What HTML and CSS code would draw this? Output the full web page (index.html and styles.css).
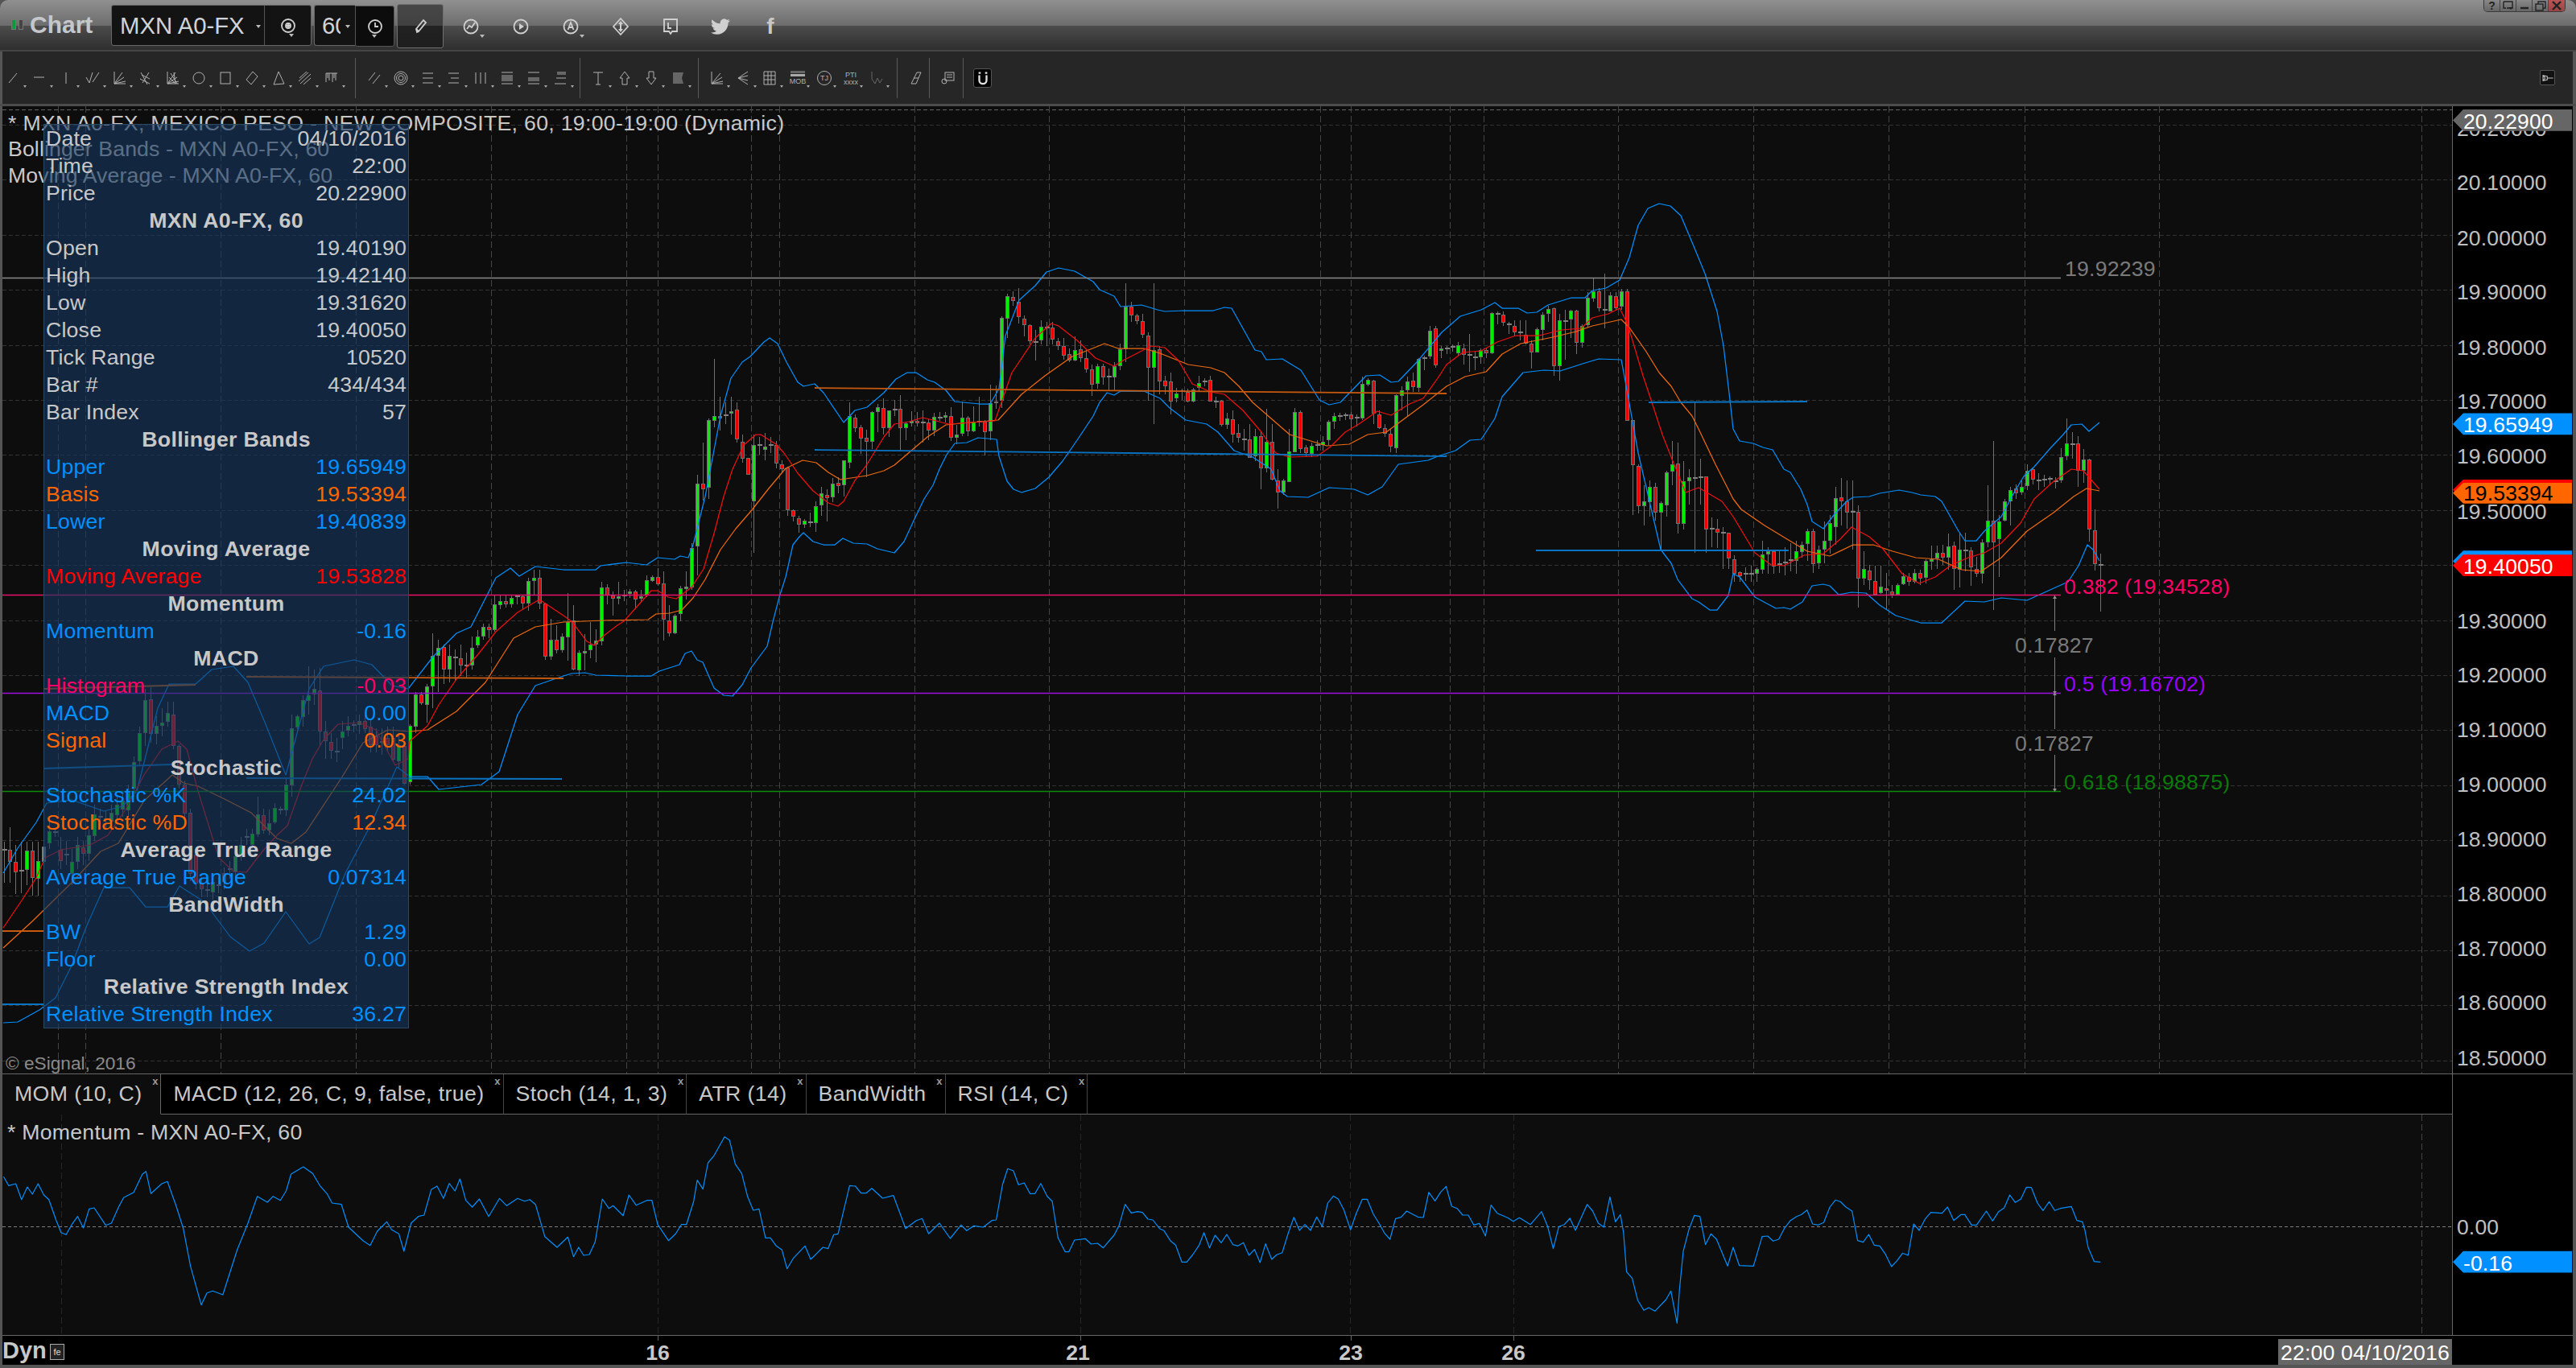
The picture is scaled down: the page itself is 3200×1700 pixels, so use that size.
FILE: index.html
```html
<!DOCTYPE html>
<html lang="en">
<head>
<meta charset="utf-8">
<title>Chart</title>
<link rel="stylesheet" href="styles.css">
</head>
<body>
<div class="window">
  <header class="titlebar">
    <div class="logo"><span class="logo-bar logo-green"></span><span class="logo-bar logo-gray"></span></div>
    <div class="app-name">Chart</div>
    <div class="symbol-box">
      <div class="symbol-text">MXN A0-FX<i class="caret caret-light"></i></div>
      <div class="symbol-link">
        <svg class="ticon" viewBox="0 0 24 24"><circle cx="12" cy="12" r="8"/><circle cx="12" cy="12" r="3"/><path d="M12 9v6M9 12h6"/></svg><i class="caret caret-light"></i>
      </div>
    </div>
    <div class="interval-box"><span class="interval-text">60</span><i class="caret caret-light"></i></div>
    <div class="clock-box"><svg class="ticon" viewBox="0 0 24 24"><circle cx="12" cy="12" r="8"/><path d="M12 7v5h4"/></svg><i class="caret caret-light"></i></div>
    <div class="pencil-box"><svg class="ticon" viewBox="0 0 24 24"><path d="M8 19l-1-4L16 4l3 3L10 18z"/><path d="M7 15l3 3"/></svg></div>
    <div class="title-icons">
      <span class="ti"><svg class="ticon" viewBox="0 0 24 24"><circle cx="12" cy="12" r="8.5"/><path d="M7 15l3-4 3 2 4-6"/></svg><i class="caret caret-light"></i></span>
      <span class="ti"><svg class="ticon" viewBox="0 0 24 24"><circle cx="12" cy="12" r="8.5"/><path class="solid" d="M10 8l6 4-6 4z"/></svg></span>
      <span class="ti"><svg class="ticon" viewBox="0 0 24 24"><circle cx="12" cy="12" r="8.5"/><path d="M8.5 16L12 7l3.5 9M10 13h4"/></svg><i class="caret caret-light"></i></span>
      <span class="ti"><svg class="ticon" viewBox="0 0 24 24"><path d="M12 2l9 10-9 10-9-10z"/><path class="solid" d="M12 5l3 4h-2v3h-2V9H9zM12 19l-3-4h2v-3h2v3h2z"/></svg></span>
      <span class="ti"><svg class="ticon" viewBox="0 0 24 24"><path d="M4 3h16v15h-6l-2 3-2-3H4z"/><path d="M9 7v7h4"/></svg></span>
      <span class="ti"><svg class="ticon" viewBox="0 0 24 24"><path class="solid" d="M23.95 4.57a10 10 0 01-2.83.8 4.96 4.96 0 002.16-2.72c-.95.56-2 .96-3.13 1.2a4.92 4.92 0 00-8.38 4.48A13.98 13.98 0 011.64 3.16a4.9 4.9 0 001.52 6.57 4.9 4.9 0 01-2.23-.62v.06a4.92 4.92 0 003.95 4.83 5 5 0 01-2.21.08 4.94 4.94 0 004.6 3.42A9.87 9.87 0 010 19.54a13.94 13.94 0 007.55 2.21c9.05 0 14-7.5 14-13.98 0-.21 0-.42-.02-.63A9.94 9.94 0 0024 4.59z"/></svg></span>
      <span class="ti ti-f">f</span>
    </div>
    <div class="win-controls">
      <span class="wc">?</span>
      <span class="wc"><svg class="wc-icon" viewBox="0 0 16 14"><path d="M2 2h11v8H6"/><path d="M2 2v8h3"/><path class="solid-dark" d="M8 9h6l-3 3z"/></svg></span>
      <span class="wc"><svg class="wc-icon" viewBox="0 0 16 14"><path d="M3 10h10" class="thick"/></svg></span>
      <span class="wc"><svg class="wc-icon" viewBox="0 0 16 14"><rect x="2" y="5" width="9" height="8"/><path d="M5 5V2h9v8h-3"/></svg></span>
      <span class="wc wc-close"><svg class="wc-icon" viewBox="0 0 16 14"><path class="thick" d="M3 2l10 10M13 2L3 12"/></svg></span>
    </div>
  </header>

  <nav class="toolbar">
    <div class="tb-group tb-g1">
      <span class="tb"><svg viewBox="0 0 20 20"><path d="M5 16L15 4"/></svg></span>
      <span class="tb"><svg viewBox="0 0 20 20"><path d="M3 9h13"/></svg></span>
      <span class="tb"><svg viewBox="0 0 20 20"><path d="M10 3v14"/></svg></span>
      <span class="tb"><svg viewBox="0 0 20 20"><path d="M2 9l4 7 4-13M10 15l4-6 4-6"/></svg></span>
      <span class="tb"><svg viewBox="0 0 20 20"><path d="M4 2v15h14M4 17L14 3M4 17l12-8M4 17l14-3"/></svg></span>
      <span class="tb"><svg viewBox="0 0 20 20"><path d="M6 16L14 3M3 11l12 6M5 6l10 5M4 3l8 15"/></svg></span>
      <span class="tb"><svg viewBox="0 0 20 20"><path d="M4 2v15h14M4 17L14 3M4 17l12-8M4 17l14-3M8 4l8 13M6 9l8 8M12 3l2 14"/></svg></span>
      <span class="tb"><svg viewBox="0 0 20 20"><circle cx="10" cy="10" r="7"/></svg></span>
      <span class="tb"><svg viewBox="0 0 20 20"><rect x="4" y="3" width="12" height="14"/></svg></span>
      <span class="tb"><svg viewBox="0 0 20 20"><path d="M11 2l6 6-8 10-6-6z"/></svg></span>
      <span class="tb"><svg viewBox="0 0 20 20"><path d="M10 2l7 15-13 1z"/></svg></span>
      <span class="tb"><svg viewBox="0 0 20 20"><path d="M2 14L14 3M4 17L17 5M3 10l9-8M8 18l9-8"/></svg></span>
      <span class="tb"><svg viewBox="0 0 20 20"><path d="M3 4h14M3 4v11M7 4v9M11 4v11M15 4v9M5 4v6M13 4v6"/></svg></span>
    </div>
    <div class="tb-group tb-g2">
      <span class="tb"><svg viewBox="0 0 20 20"><path d="M3 13L11 3M8 17l9-11"/></svg></span>
      <span class="tb"><svg viewBox="0 0 20 20"><circle cx="10" cy="10" r="8"/><circle cx="10" cy="10" r="5.5"/><circle cx="10" cy="10" r="3"/></svg></span>
      <span class="tb"><svg viewBox="0 0 20 20"><path d="M4 4h13M4 10h13M4 16h13"/></svg></span>
      <span class="tb"><svg viewBox="0 0 20 20"><path d="M3 4h13M6 10h10M3 16h13"/></svg></span>
      <span class="tb"><svg viewBox="0 0 20 20"><path d="M4 3v14M10 3v14M16 3v14"/></svg></span>
      <span class="tb"><svg viewBox="0 0 20 20"><path d="M3 3h14M3 17h14"/><rect class="fill-gray" x="3" y="6" width="14" height="8"/></svg></span>
      <span class="tb"><svg viewBox="0 0 20 20"><path d="M3 3h14M3 17h14"/><rect class="fill-gray" x="3" y="9" width="14" height="5"/></svg></span>
      <span class="tb"><svg viewBox="0 0 20 20"><path d="M6 3h11M3 17h14M5 10h12"/><rect class="fill-gray" x="6" y="3" width="11" height="3"/></svg></span>
    </div>
    <div class="tb-group tb-g3">
      <span class="tb"><svg viewBox="0 0 20 20"><path d="M4 3h12M10 3v15M7 18h6"/></svg></span>
      <span class="tb"><svg viewBox="0 0 20 20"><path d="M10 2l6 8h-3v8H7v-8H4z"/></svg></span>
      <span class="tb"><svg viewBox="0 0 20 20"><path d="M10 18l6-8h-3V2H7v8H4z"/></svg></span>
      <span class="tb"><svg viewBox="0 0 20 20"><path class="fill-gray" d="M4 3h13l-2 7 2 7H4z"/></svg></span>
    </div>
    <div class="tb-group tb-g4">
      <span class="tb"><svg viewBox="0 0 20 20"><path d="M4 2v15h14M4 17L15 4M4 17l13-8M4 17l14-3"/></svg></span>
      <span class="tb"><svg viewBox="0 0 20 20"><path d="M16 2L4 10l12 8M16 7l-12 3 12 3"/></svg></span>
      <span class="tb"><svg viewBox="0 0 20 20"><path d="M3 2h14v16H3zM3 7h14M3 12h14M8 2v16M12 2v16"/></svg></span>
      <span class="tb tb-text"><svg viewBox="0 0 24 20"><rect class="fill-gray" x="3" y="1" width="18" height="3"/><rect class="fill-lite" x="3" y="5" width="18" height="3"/><text class="mini" x="12" y="17">MOB</text></svg></span>
      <span class="tb tb-text"><svg viewBox="0 0 24 20"><circle cx="12" cy="10" r="8.5"/><text class="mini" x="12" y="13">TJ</text></svg></span>
      <span class="tb tb-text"><svg viewBox="0 0 24 20"><text class="mini" x="12" y="9">PTI</text><text class="mini" x="12" y="18">xxxx</text></svg></span>
      <span class="tb"><svg viewBox="0 0 20 20"><path class="dim" d="M5 2v9l4 6 3-7 3 6 3-5"/></svg></span>
    </div>
    <div class="tb-group tb-g5">
      <span class="tb tb-plain"><svg viewBox="0 0 20 20"><path d="M12 3h5l-6 14H5z"/><path d="M8 10h6"/></svg></span>
    </div>
    <div class="tb-group tb-g6">
      <span class="tb tb-plain"><svg viewBox="0 0 20 20"><rect x="6" y="3" width="11" height="10"/><path d="M8 6h7M8 9h7"/><circle cx="5" cy="14" r="3"/></svg></span>
    </div>
    <div class="magnet-box">
      <svg viewBox="0 0 20 20"><path d="M5 6v7a5 5 0 0010 0V6" class="thick"/><path d="M4 3h3M13 3h3" class="thick"/></svg>
    </div>
    <div class="pin-box">
      <svg viewBox="0 0 24 20"><path d="M3 5l8 2v6l-8 2zM3 5l4 5-4 5M11 10h11"/></svg>
    </div>
  </nav>
  <div class="toolbar-strip"></div>

  <main class="chart">
    <section class="row row-main">
      <div class="plot plot-main">
        <svg id="priceCanvas" class="canvas" viewBox="3 132 3043 1202">
          <g id="priceGrid"></g>
          <g id="candles"></g>
          <g id="bands"></g>
          <g class="drawn">
            <line class="obj-gray" x1="3" y1="345.5" x2="2560" y2="345.5"/>
            <line class="obj-pink" x1="3" y1="739.5" x2="2560" y2="739.5"/>
            <line class="obj-purple" x1="3" y1="861.5" x2="2560" y2="861.5"/>
            <line class="obj-green" x1="3" y1="983.5" x2="2560" y2="983.5"/>
            <line class="obj-orange" x1="3" y1="1157" x2="54" y2="1157"/>
            <line class="obj-orange" x1="54" y1="856" x2="243" y2="851"/>
            <line class="obj-orange" x1="306" y1="841" x2="700" y2="843"/>
            <line class="obj-orange" x1="1012" y1="482" x2="1797" y2="489"/>
            <line class="obj-blue" x1="3" y1="1248" x2="54" y2="1248"/>
            <line class="obj-blue" x1="54" y1="955" x2="214" y2="950"/>
            <line class="obj-blue" x1="306" y1="967" x2="698" y2="968"/>
            <line class="obj-blue" x1="1012" y1="559" x2="1797" y2="567"/>
            <line class="obj-blue" x1="2048" y1="500" x2="2245" y2="499"/>
            <line class="obj-blue" x1="1908" y1="684" x2="2222" y2="684"/>
            <path class="obj-arrow" d="M2552.5 740v44M2552.5 817v89M2552.5 938v45"/>
            <path class="obj-head" d="M2550 744l2.5-4 2.5 4zM2550 980l2.5 4 2.5-4zM2550 859l2.5 3 2.5-3zM2550 864l2.5-3 2.5 3z"/>
          </g>
          <g class="chart-labels">
            <text class="lbl lbl-gray" x="2565" y="343">19.92239</text>
            <text class="lbl lbl-pink" x="2564" y="738">0.382 (19.34528)</text>
            <text class="lbl lbl-gray lbl-mid" x="2552" y="811">0.17827</text>
            <text class="lbl lbl-purple" x="2564" y="859">0.5 (19.16702)</text>
            <text class="lbl lbl-gray lbl-mid" x="2552" y="933">0.17827</text>
            <text class="lbl lbl-green" x="2564" y="981">0.618 (18.98875)</text>
          </g>
        </svg>
        <div class="legend">
          <div class="legend-main">* MXN A0-FX, MEXICO PESO - NEW COMPOSITE, 60, 19:00-19:00 (Dynamic)</div>
          <div>Bollinger Bands - MXN A0-FX, 60</div>
          <div>Moving Average - MXN A0-FX, 60</div>
        </div>
        <div class="copyright">© eSignal, 2016</div>
        <div class="info">
          <div class="irow"><span>Date</span><span>04/10/2016</span></div>
          <div class="irow"><span>Time</span><span>22:00</span></div>
          <div class="irow"><span>Price</span><span>20.22900</span></div>
          <div class="ihead">MXN A0-FX, 60</div>
          <div class="irow"><span>Open</span><span>19.40190</span></div>
          <div class="irow"><span>High</span><span>19.42140</span></div>
          <div class="irow"><span>Low</span><span>19.31620</span></div>
          <div class="irow"><span>Close</span><span>19.40050</span></div>
          <div class="irow"><span>Tick Range</span><span>10520</span></div>
          <div class="irow"><span>Bar #</span><span>434/434</span></div>
          <div class="irow"><span>Bar Index</span><span>57</span></div>
          <div class="ihead">Bollinger Bands</div>
          <div class="irow c-blue"><span>Upper</span><span>19.65949</span></div>
          <div class="irow c-orange"><span>Basis</span><span>19.53394</span></div>
          <div class="irow c-blue"><span>Lower</span><span>19.40839</span></div>
          <div class="ihead">Moving Average</div>
          <div class="irow c-red"><span>Moving Average</span><span>19.53828</span></div>
          <div class="ihead">Momentum</div>
          <div class="irow c-blue"><span>Momentum</span><span>-0.16</span></div>
          <div class="ihead">MACD</div>
          <div class="irow c-pink"><span>Histogram</span><span>-0.03</span></div>
          <div class="irow c-blue"><span>MACD</span><span>0.00</span></div>
          <div class="irow c-orange"><span>Signal</span><span>0.03</span></div>
          <div class="ihead">Stochastic</div>
          <div class="irow c-blue"><span>Stochastic %K</span><span>24.02</span></div>
          <div class="irow c-orange"><span>Stochastic %D</span><span>12.34</span></div>
          <div class="ihead">Average True Range</div>
          <div class="irow c-blue"><span>Average True Range</span><span>0.07314</span></div>
          <div class="ihead">BandWidth</div>
          <div class="irow c-blue"><span>BW</span><span>1.29</span></div>
          <div class="irow c-blue"><span>Floor</span><span>0.00</span></div>
          <div class="ihead">Relative Strength Index</div>
          <div class="irow c-blue"><span>Relative Strength Index</span><span>36.27</span></div>
        </div>
      </div>
      <div class="axis">
        <svg class="canvas" viewBox="3047 132 150 1202">
          <g class="axis-labels">
            <text x="3052" y="165">20.20000</text>
            <text x="3052" y="233">20.10000</text>
            <text x="3052" y="302">20.00000</text>
            <text x="3052" y="370">19.90000</text>
            <text x="3052" y="439">19.80000</text>
            <text x="3052" y="507">19.70000</text>
            <text x="3052" y="575">19.60000</text>
            <text x="3052" y="644">19.50000</text>
            <text x="3052" y="781">19.30000</text>
            <text x="3052" y="849">19.20000</text>
            <text x="3052" y="917">19.10000</text>
            <text x="3052" y="986">19.00000</text>
            <text x="3052" y="1054">18.90000</text>
            <text x="3052" y="1123">18.80000</text>
            <text x="3052" y="1191">18.70000</text>
            <text x="3052" y="1259">18.60000</text>
            <text x="3052" y="1328">18.50000</text>
          </g>
          <polygon class="tag-gray" points="3047,145.5 3060,132 3196,132 3196,159 3060,159"/>
          <text class="tag-text" x="3060" y="156">20.22900</text>
          <polygon class="tag-blue" points="3047,525.5 3060,512 3196,512 3196,539 3060,539"/>
          <text class="tag-text" x="3060" y="536">19.65949</text>
          <polygon class="tag-red" points="3047,608 3060,595 3196,595 3196,621 3060,621"/>
          <polygon class="tag-orange" points="3047,612 3060,599 3196,599 3196,625 3060,625"/>
          <text class="tag-text tag-dark" x="3060" y="621">19.53394</text>
          <polygon class="tag-blue" points="3047,697 3060,684 3196,684 3196,711 3060,711"/>
          <polygon class="tag-red" points="3047,702.5 3060,689 3196,689 3196,716 3060,716"/>
          <text class="tag-text" x="3060" y="713">19.40050</text>
        </svg>
      </div>
    </section>

    <section class="row row-tabs">
      <div class="tabs">
        <div class="tab tab-active">MOM (10, C)<i class="tab-x">x</i></div>
        <div class="tab">MACD (12, 26, C, 9, false, true)<i class="tab-x">x</i></div>
        <div class="tab">Stoch (14, 1, 3)<i class="tab-x">x</i></div>
        <div class="tab">ATR (14)<i class="tab-x">x</i></div>
        <div class="tab">BandWidth<i class="tab-x">x</i></div>
        <div class="tab">RSI (14, C)<i class="tab-x">x</i></div>
        <div class="tab-rest"></div>
      </div>
      <div class="axis"></div>
    </section>

    <section class="row row-sub">
      <div class="plot plot-sub">
        <svg id="momentumCanvas" class="canvas" viewBox="3 1385 3043 274"></svg>
        <div class="sub-legend">* Momentum - MXN A0-FX, 60</div>
      </div>
      <div class="axis">
        <svg class="canvas" viewBox="3047 1385 150 274">
          <g class="axis-labels"><text x="3052" y="1534">0.00</text></g>
          <polygon class="tag-blue" points="3047,1568.5 3060,1555 3196,1555 3196,1582 3060,1582"/>
          <text class="tag-text" x="3060" y="1579">-0.16</text>
        </svg>
      </div>
    </section>

    <footer class="timebar">
      <svg class="canvas" viewBox="3 1660 3193 36">
        <text class="time-dyn" x="3" y="1688">Dyn</text>
        <rect class="time-box" x="62.5" y="1670.5" width="17" height="19"/>
        <text class="time-fe" x="71" y="1684">fe</text>
        <path class="time-tick" d="M817.5 1660v6M1342.5 1660v6M1678.5 1660v6M1880.5 1660v6"/>
        <text class="time-date" x="817" y="1690">16</text>
        <text class="time-date" x="1339" y="1690">21</text>
        <text class="time-date" x="1678" y="1690">23</text>
        <text class="time-date" x="1880" y="1690">26</text>
        <rect class="time-cursor" x="2830" y="1664" width="216" height="32"/>
        <text class="time-cursor-text" x="2938" y="1690">22:00 04/10/2016</text>
      </svg>
    </footer>
  </main>
</div>
<script src="chart.js"></script>
</body>
</html>
```
FILE: styles.css
```css
* { box-sizing: border-box; }
html, body { margin: 0; padding: 0; background: #000; }
body { font-family: "Liberation Sans", Arial, sans-serif; color: #c8c8c8; }

.window {
  width: 3200px; height: 1700px; overflow: hidden;
  display: flex; flex-direction: column;
  background: #555;
  padding-bottom: 4px;
}

/* title bar */
.titlebar {
  height: 64px; flex: none; display: flex; align-items: flex-start;
  background: linear-gradient(#909090 0, #6c6c6c 32px, #4c4c4c 32px, #2e2e2e 62px, #454545 62px, #454545 64px);
  border-radius: 10px 10px 0 0;
}
.logo { display: flex; gap: 3px; margin: 24px 0 0 14px; }
.logo-bar { width: 6px; height: 13px; border: 1px solid #777; }
.logo-green { background: #0c9a3c; }
.logo-gray { background: #444; }
.app-name { font-size: 30px; font-weight: bold; color: #c4c8cc; margin: 14px 0 0 8px; width: 101px; }
.symbol-box {
  width: 249px; height: 51px; margin-top: 6px; display: flex;
  background: #131313; border: 1px solid #666; border-radius: 3px;
}
.symbol-text { width: 190px; height: 100%; padding-left: 10px; font-size: 29.3px; line-height: 49px; color: #d0d4d8; border-right: 1px solid #555; position: relative; }
.symbol-link { flex: 1; display: flex; align-items: center; justify-content: center; position: relative; }
.interval-box {
  width: 51px; height: 51px; margin: 6px 0 0 3px; background: #131313; border: 1px solid #666; border-right: 0;
  position: relative; overflow: hidden; border-radius: 3px 0 0 3px;
}
.interval-text { display: block; width: 23px; overflow: hidden; margin-left: 9px; font-size: 29.3px; line-height: 49px; color: #d0d4d8; }
.clock-box {
  width: 49px; height: 51px; margin-top: 7px; background: #0c0c0c; border: 1px solid #555; border-radius: 0 3px 3px 3px;
  display: flex; align-items: center; justify-content: center; position: relative;
}
.pencil-box {
  width: 58px; height: 55px; margin: 5px 0 0 3px; border: 1px solid #707070; border-radius: 3px;
  background: linear-gradient(#484848 0, #404040 50%, #222 50%, #1e1e1e 100%);
  display: flex; align-items: center; justify-content: center;
}
.ticon { width: 24px; height: 24px; fill: none; stroke: #d0d0d0; stroke-width: 1.8; }
.ticon .solid { fill: #d0d0d0; stroke: none; }
.title-icons { display: flex; margin: 20px 0 0 3px; }
.ti { width: 62px; height: 26px; display: flex; align-items: center; justify-content: center; position: relative; }
.ti-f { font-size: 28px; font-weight: bold; color: #c8c8c8; }
.caret { position: absolute; width: 0; height: 0; border-left: 3px solid transparent; border-right: 3px solid transparent; border-top: 4px solid #bbb; }
.caret-light { right: 10px; bottom: 14px; }
.ti .caret { right: 14px; bottom: -1px; }
.symbol-link .caret, .clock-box .caret { right: 21px; bottom: 10px; }
.interval-box .caret { right: 6px; bottom: 21px; }
.symbol-text .caret { right: 4px; bottom: 21px; }

.win-controls { margin-left: auto; margin-right: 13px; display: flex; height: 15px; border: 1px solid #3a3a3a; border-top: 0; border-radius: 0 0 5px 5px; overflow: hidden; }
.wc {
  width: 20px; height: 100%; display: flex; align-items: center; justify-content: center;
  font-size: 14px; font-weight: bold; color: #222; border-right: 1px solid #444;
  background: linear-gradient(#888, #666);
}
.wc:last-child { border-right: 0; }
.wc-close { background: linear-gradient(#b55, #944); }
.wc-icon { width: 16px; height: 14px; fill: none; stroke: #222; stroke-width: 1.4; }
.wc-icon .thick { stroke-width: 2.4; }
.wc-icon .solid-dark { fill: #222; stroke: none; }

/* drawing toolbar */
.toolbar {
  height: 65px; flex: none; display: flex; align-items: center; position: relative;
  margin: 0 4px 0 3px; background: #262626;
}
.tb-group { height: 50px; display: flex; align-items: center; border-right: 1px solid #5a5a5a; flex: none; }
.tb-g1 { width: 439px; padding-left: 3px; }
.tb-g2 { width: 279px; padding-left: 13px; }
.tb-g3 { width: 147px; padding-left: 12px; }
.tb-g4 { width: 247px; padding-left: 12px; }
.tb-g5 { width: 40px; padding-left: 12px; }
.tb-g6 { width: 42px; padding-left: 13px; }
.tb { width: 33px; height: 30px; flex: none; display: flex; align-items: center; position: relative; }
.tb::after {
  content: ""; position: absolute; right: 6px; bottom: 3px;
  border-left: 2.5px solid transparent; border-right: 2.5px solid transparent; border-top: 3px solid #aaa;
}
.tb-plain { width: 22px; }
.tb-plain::after { display: none; }
.tb svg { width: 20px; height: 20px; fill: none; stroke: #b0b0b0; stroke-width: 1; }
.tb-text svg { width: 24px; }
.tb .fill-gray { fill: #666; stroke: none; }
.tb .fill-lite { fill: #aaa; stroke: none; }
.tb .dim { stroke: #666; }
.tb .mini { font-size: 9px; fill: #b0b0b0; stroke: none; text-anchor: middle; }
.magnet-box {
  width: 23px; height: 24px; margin-left: 12px; background: #000; border: 1px solid #555; border-radius: 3px;
  display: flex; align-items: center; justify-content: center;
}
.magnet-box svg { width: 18px; height: 18px; fill: none; stroke: #e0e0e0; }
.magnet-box .thick { stroke-width: 2.6; }
.pin-box {
  width: 19px; height: 19px; margin-left: auto; margin-right: 22px; background: #111; border: 1px solid #555; border-radius: 2px;
  display: flex; align-items: center; justify-content: center;
}
.pin-box svg { width: 16px; height: 14px; fill: none; stroke: #c0c0c0; stroke-width: 1.6; }
.toolbar-strip { height: 3px; flex: none; background: #4c4c4c; }

/* chart */
.chart { flex: 1; margin: 0 4px 0 3px; background: #000; display: flex; flex-direction: column; min-height: 0; }
.row { display: flex; flex: none; }
.row-main { height: 1202px; }
.row-tabs { height: 51px; border-top: 1px solid #666; }
.row-sub { height: 274px; }
.plot { width: 3043px; flex: none; position: relative; background: #0d0d0d; overflow: hidden; }
.axis { flex: 1; border-left: 1px solid #666; background: #000; }
.canvas { display: block; width: 100%; height: 100%; overflow: hidden; }

.legend { position: absolute; left: 7px; top: 5px; font-size: 26.67px; line-height: 32.4px; letter-spacing: .12px; color: #c8c8c8; }
.legend-main { letter-spacing: .31px; }
.copyright { position: absolute; left: 4px; bottom: 0; font-size: 22.67px; line-height: 26px; color: #8a8a8a; }

.info {
  position: absolute; left: 51px; top: 22px; width: 454px;
  background: rgba(21, 55, 94, .615); border: 1px solid #2a4a63;
  font-size: 26.67px; line-height: 34px; letter-spacing: .2px; color: #c8c8c8;
}
.irow { display: flex; justify-content: space-between; height: 34px; padding: 0 2px 0 2px; white-space: nowrap; }
.ihead { height: 34px; text-align: center; font-weight: bold; letter-spacing: .35px; }
.c-blue { color: #0090ff; }
.c-orange { color: #ff6600; }
.c-red { color: #ff0000; }
.c-pink { color: #ff0066; }

/* svg chart parts */
.grid-h { stroke: #333; stroke-width: 1; stroke-dasharray: 5 3; }
.grid-v { stroke: #444; stroke-width: 1; stroke-dasharray: 8 4; }
.grid-top { stroke: #666; stroke-width: 1; stroke-dasharray: 5 3; }
.grid-faint { stroke: #262626; stroke-width: 1; stroke-dasharray: 8 4; }
.zero { stroke: #808080; stroke-width: 1; stroke-dasharray: 4 3; }
.wicks { stroke: #707070; stroke-width: 1; fill: none; shape-rendering: crispEdges; }
.body-g { fill: #00f000; stroke: #707070; stroke-width: 1; shape-rendering: crispEdges; }
.body-r { fill: #f00000; stroke: #707070; stroke-width: 1; shape-rendering: crispEdges; }
.doji { stroke: #808080; stroke-width: 2; shape-rendering: crispEdges; }
.band { fill: none; stroke-width: 1.25; stroke-linejoin: round; }
.band-blue { stroke: #0090ff; }
.band-red { stroke: #f01010; }
.band-orange { stroke: #f06a10; }
.momentum { fill: none; stroke: #0090ff; stroke-width: 1.2; stroke-linejoin: round; }
.drawn line { stroke-width: 1.3; }
.obj-gray { stroke: #8a8a8a; }
.obj-pink { stroke: #e8106a; }
.obj-purple { stroke: #a010e0; }
.obj-green { stroke: #0c8a0c; }
.drawn .obj-orange { stroke: #c85a10; stroke-width: 1.8; }
.drawn .obj-blue { stroke: #0a74c4; stroke-width: 1.8; }
.obj-arrow { stroke: #808080; stroke-width: 1; fill: none; }
.obj-head { fill: #909090; }
.lbl { font-size: 26.67px; letter-spacing: .2px; }
.lbl-gray { fill: #7a7a7a; }
.lbl-pink { fill: #ff0066; }
.lbl-purple { fill: #9900ff; }
.lbl-green { fill: #0a7a0a; }
.lbl-mid { text-anchor: middle; }
.axis-labels text { font-size: 26.67px; letter-spacing: .17px; fill: #c0c0c0; }
.tag-gray { fill: #666; }
.tag-blue { fill: #0090ff; }
.tag-red { fill: #ff0000; }
.tag-orange { fill: #ff6600; }
.tag-text { font-size: 26.67px; letter-spacing: .17px; fill: #fff; }
.tag-dark { fill: #000; }

/* tabs */
.tabs { width: 3043px; flex: none; display: flex; background: #000; }
.tab {
  height: 100%; position: relative; display: flex; align-items: center; white-space: nowrap;
  padding: 0 23px 0 15px; font-size: 26.67px; letter-spacing: .4px; color: #c8c8c8;
  border-right: 1px solid #444; border-bottom: 1px solid #666;
}
.tab-active { background: #0d0d0d; border-bottom-color: #0d0d0d; border-right-color: #666; }
.tab-x { position: absolute; right: 3px; top: 2px; font-size: 13px; font-style: normal; font-weight: bold; color: #999; line-height: 14px; letter-spacing: 0; }
.tab-rest { flex: 1; border-bottom: 1px solid #666; }
.sub-legend { position: absolute; left: 6px; top: 6px; font-size: 26.67px; line-height: 32px; letter-spacing: .25px; color: #c8c8c8; }

/* time bar */
.timebar { flex: 1; border-top: 1px solid #666; background: #000; min-height: 0; }
.time-dyn, .time-date { font-weight: bold; fill: #c8c8c8; }
.time-dyn { font-size: 29px; }
.time-date { font-size: 26.67px; text-anchor: middle; }
.time-box { fill: #222; stroke: #aaa; stroke-width: 1; }
.time-fe { font-size: 11px; fill: #ddd; text-anchor: middle; }
.time-tick { stroke: #666; stroke-width: 1; }
.time-cursor { fill: #666; }
.time-cursor-text { font-size: 26.67px; letter-spacing: .15px; fill: #fff; text-anchor: middle; }
```
FILE: chart.js
```js
// Chart data in pixel space of the window: [bodyTop, bodyBottom, wickTop, wickBottom, colour]
// colour: 1 up (green), 0 down (red)
var SVG_NS = "http://www.w3.org/2000/svg";
function el(parent, name, attrs) {
  var n = document.createElementNS(SVG_NS, name);
  for (var k in attrs) n.setAttribute(k, attrs[k]);
  parent.appendChild(n);
  return n;
}

var A = [
[1056,1056,1046,1097,1],[1056,1070,1028,1097,0],[1071,1083,1050,1111,0],[1082,1082,1046,1110,1],[1057,1080,1046,1100,1],[1057,1090,1046,1113,0],
[1070,1091,1046,1113,1],[1052,1070,1030,1080,1],[1033,1047,1020,1055,1],[1034,1034,1030,1040,1],[1056,1069,1040,1080,0],[1062,1062,1045,1075,1],
[1071,1085,1055,1100,1],[1050,1070,1040,1080,1],[1053,1060,1045,1075,0],[1038,1060,1030,1070,1],[1012,1038,1000,1045,1],[1015,1015,1005,1030,1],
[1018,1018,1008,1030,1],[1010,1020,1000,1030,1],[1000,1012,990,1020,1],[995,1005,985,1015,1],[985,1006,975,1015,1],[947,979,940,990,1],
[911,945,903,952,1],[870,910,856,927,1],[869,911,854,923,0],[902,911,890,925,1],[898,901,880,915,1],[886,896,872,903,1],
[888,926,872,931,0],[927,974,925,980,0],[975,1010,970,1020,0],[1010,1085,1005,1095,0],[1062,1097,1055,1105,0],[1097,1104,1090,1115,0],
[1106,1106,1095,1115,0],[1096,1108,1088,1118,1],[1100,1100,1090,1110,1],[1085,1095,1078,1105,0],[1080,1080,1070,1092,1],[1064,1083,1055,1090,1],
[1050,1062,1040,1070,1],[1040,1040,1030,1050,1],[1036,1049,1030,1055,1],[1012,1036,990,1040,1],[1013,1031,1005,1036,0],[1023,1031,1006,1038,1],
[1004,1021,998,1024,1],[1006,1006,1002,1012,1],[975,1006,967,1014,1],[905,975,888,990,1],[890,903,888,911,1],[870,890,864,903,1],
[864,870,828,888,1],[856,862,832,876,1],[858,908,830,927,0],[909,920,896,943,0],[922,932,911,943,0],[934,934,917,947,1],
[909,916,896,931,1],[902,907,890,915,1],[901,901,895,910,1],[896,900,888,912,1],[896,905,888,911,0],[903,925,895,935,0],
[915,925,905,935,0],[922,922,905,938,1],[917,925,903,935,0],[917,943,903,947,0],[926,945,911,955,1],[927,973,923,975,0]];

var B = [
[902,971,900,975,1],[863,902,860,911,1],[863,873,860,876,0],[853,875,850,898,1],[815,852,787,880,1],[805,814,795,860,1],[804,831,801,850,0],
[815,831,801,848,1],[817,817,807,846,1],[818,826,801,840,0],[827,827,811,843,1],[805,826,791,832,1],[791,801,783,805,1],[779,790,775,795,1],
[779,782,775,793,0],[751,782,739,785,1],[747,751,739,757,1],[747,750,739,755,0],[743,750,739,755,1],[741,741,739,751,1],[741,749,739,757,0],
[722,749,718,759,1],[718,721,708,739,1],[718,749,708,757,0],[750,815,749,820,0],[795,815,769,820,1],[795,807,777,812,0],[791,807,787,811,1]];

var C = [
[773,791,737,821,1],[771,831,752,833,0],[811,832,808,840,1],[809,811,788,833,1],[801,807,773,818,1],[796,800,782,823,1],[730,796,723,802,1],
[730,739,726,751,0],[740,743,735,765,0],[741,743,723,751,1],[740,740,733,747,1],[735,737,732,743,1],[735,744,733,757,0],[741,743,733,747,1],
[721,739,715,742,1],[717,721,715,723,1],[717,725,706,728,0],[725,769,710,796,0],[771,786,752,791,0],[765,786,763,788,1],[731,762,728,772,1],
[729,731,710,745,1],[681,729,675,733,1],[601,678,590,715,1],[601,607,550,622,0],[522,605,520,620,1],[517,522,446,531,1],[517,519,493,535,0],
[516,516,500,527,1],[511,513,493,540,1],[509,545,500,550,0],[549,569,540,575,0],[569,589,569,590,0],[553,622,540,687,1],[553,553,543,565,1],
[555,558,538,572,1],[553,553,543,563,1],[553,575,548,582,0],[577,582,572,587,0],[581,633,580,641,0],[634,641,633,648,0],[644,651,641,662,0],
[647,651,645,656,1],[649,649,637,655,1],[629,649,623,661,1],[613,627,605,641,1],[615,618,608,648,0],[601,617,594,624,1],[600,603,593,613,0],
[572,602,572,617,1],[517,574,500,582,1],[519,531,515,537,0],[531,544,528,564,0],[544,548,534,593,0],[512,548,511,558,1],[506,511,502,537,1],
[507,531,495,540,0],[510,531,510,543,1],[509,509,497,517,1],[508,531,491,560,0],[526,531,525,547,1],[523,525,511,530,1],[523,525,512,530,0],
[525,525,510,550,1],[525,534,521,547,0],[518,534,513,542,1],[519,519,512,523,1],[516,518,512,525,1],[517,543,506,548,0],[540,543,528,552,1],
[519,538,499,542,1],[519,535,517,542,0],[524,535,505,537,1],[524,524,493,530,1],[524,536,522,566,0],[501,535,478,547,1],[499,500,479,508,1]];

var D = [
[395,497,393,507,1],[368,395,365,420,1],[369,373,362,380,0],[375,393,358,402,0],[396,403,392,418,0],[404,423,403,428,0],[425,425,410,448,1],
[406,422,398,428,1],[407,407,400,430,1],[407,421,400,428,0],[424,429,420,435,0],[430,441,420,447,0],[440,447,433,450,0],[435,447,418,449,1],
[434,444,423,450,0],[445,458,435,463,0],[459,477,453,492,0],[455,476,452,483,1],[455,468,452,478,0],[468,468,458,485,0],[455,468,450,485,1],
[434,454,427,460,1],[381,433,352,450,1],[381,391,375,400,0],[392,398,390,403,0],[399,415,390,420,0],[417,456,413,498,0],[435,456,352,527,1],
[434,473,430,490,0],[473,479,467,490,0],[474,498,463,515,0],[489,494,482,500,1],[486,486,483,497,1],[487,498,483,500,0],[484,498,482,500,1],
[476,481,467,487,1],[474,474,470,480,1],[472,498,467,498,0],[499,499,493,507,1],[498,527,497,530,0],[520,527,513,533,1],[521,539,510,550,0],
[538,543,527,550,0],[546,546,533,560,1],[546,568,527,569,0],[542,566,533,573,1],[542,581,537,608,0],[549,581,508,587,1],[549,595,527,597,0],
[597,611,583,632,0],[597,611,595,615,1],[561,598,533,598,1],[512,561,507,562,1],[512,557,510,563,0],[556,562,553,568,0],[554,563,550,568,1],
[553,553,547,560,1],[549,552,542,560,1],[524,546,522,553,1],[517,523,513,533,1],[517,517,513,523,1],[516,516,513,522,1],[515,520,512,535,0],
[519,519,515,530,1],[477,519,468,522,1],[472,477,470,480,1],[473,513,472,527,0],[515,531,510,533,0],[532,538,527,543,0],[539,554,533,562,0],
[491,556,490,563,1],[485,491,480,510,1],[474,484,468,518,1],[473,480,463,487,0],[446,481,445,487,1],[445,445,442,460,1],[411,442,405,446,1],
[408,453,405,457,0],[433,435,430,445,1],[433,433,430,440,1],[431,431,428,437,1],[429,438,425,442,1],[433,440,427,453,0],[441,441,415,462,1],
[444,444,437,460,1],[435,443,433,452,1],[435,438,433,445,0],[389,438,388,440,1],[390,390,387,403,1],[391,400,387,405,0],[403,403,400,415,1],
[405,412,398,418,0],[413,413,398,423,1],[416,426,398,428,0],[427,437,423,458,0],[409,437,407,438,1],[391,409,388,423,1],[384,389,380,400,1],
[383,454,382,467,0],[398,454,390,473,1],[399,399,385,447,1],[386,396,385,420,1],[386,425,385,440,0],[405,425,403,432,1],[370,403,363,407,1],
[362,370,345,375,1],[362,382,358,387,0],[385,385,340,408,1],[367,386,363,387,1],[368,382,363,385,0],[362,380,359,385,1],[362,522,359,523,0]];

var E = [
[522,577,522,640,0],[579,628,577,638,0],[623,628,603,653,1],[605,623,597,642,1],[605,636,600,647,0],[625,636,623,685,1],[587,627,585,642,1],
[577,585,548,603,1],[576,650,550,663,0],[598,650,573,658,1],[593,597,583,627,1],[594,594,499,687,1],[593,593,570,627,1],[592,657,592,687,0],
[657,657,643,680,1],[657,661,645,681,0],[662,662,655,707,1],[662,693,662,707,0],[695,712,690,723,0],[711,715,710,723,0],[713,713,705,722,1],
[713,713,703,723,1],[707,712,705,723,1],[689,707,672,713,1],[685,688,680,713,1],[685,703,683,713,0],[701,701,683,712,1],[699,699,680,715,1],
[696,696,675,710,1],[685,696,672,713,1],[677,685,673,693,1],[660,675,657,697,1],[660,700,657,712,0],[683,699,678,707,1],[672,682,648,700,1],
[650,671,640,688,1],[619,654,605,677,1],[618,622,594,653,0],[623,636,597,657,0],[636,636,597,683,1],[636,718,628,755,0],[707,718,685,727,1],
[709,720,702,733,0],[722,738,703,740,0],[729,736,703,738,1],[731,733,712,757,0],[735,738,727,743,0],[727,738,725,740,1],[716,725,712,727,1],
[717,722,712,728,0],[712,722,707,725,1],[712,718,708,727,0],[697,717,695,725,1],[695,697,678,708,1],[687,693,678,707,1],[687,692,677,702,0],
[679,692,663,708,1],[678,706,673,733,0],[683,707,663,730,1],[684,684,662,710,1],[684,704,680,728,0],[707,712,692,717,0],[674,712,670,725,1],
[647,673,603,680,1],[647,673,548,758,0],[648,669,640,717,1],[623,646,620,648,1],[609,622,605,653,1],[607,612,602,620,0],[605,611,597,615,1],
[585,603,577,609,1],[583,595,582,602,0],[597,597,588,609,1],[596,596,590,605,1],[595,595,592,603,1],[598,598,593,607,1],[568,596,557,600,1],
[551,566,520,572,1],[552,552,537,570,1],[551,584,542,605,0],[571,584,558,600,1],[571,657,570,673,0],[659,700,633,709,0],[702,702,688,760,1]];

var UPPER = [[4,1085],[22,1054],[45,1022],[58,998],[89,994],[112,1002],[129,1008],[152,1002],[170,983],[196,880],[210,850],[243,850],[263,832],[290,828],[308,848],[330,900],[355,963],[384,856],[402,828],[440,820],[462,826],[487,852],[507,856],[538,816],[567,787],[585,779],[616,718],[634,706],[645,716],[665,704],[700,708],[740,708],[746,703],[778,699],[803,702],[817,693],[838,695],[845,691],[855,693],[861,677],[876,617],[895,517],[908,470],[922,450],[932,443],[949,425],[956,420],[966,427],[977,450],[991,475],[998,480],[1012,477],[1023,488],[1048,525],[1062,510],[1077,506],[1098,488],[1113,471],[1127,463],[1138,463],[1152,472],[1161,475],[1175,485],[1186,499],[1217,502],[1230,502],[1241,483],[1249,417],[1266,373],[1286,355],[1300,338],[1315,333],[1335,337],[1358,350],[1366,360],[1384,368],[1392,381],[1418,379],[1438,385],[1447,387],[1470,386],[1507,386],[1521,382],[1530,383],[1559,435],[1567,437],[1573,447],[1593,446],[1616,460],[1639,497],[1651,503],[1665,500],[1697,467],[1714,466],[1728,475],[1737,474],[1760,450],[1791,413],[1814,393],[1840,385],[1857,376],[1866,383],[1886,383],[1897,389],[1909,388],[1923,379],[1952,370],[1969,370],[1978,361],[1995,358],[2012,348],[2024,320],[2035,280],[2047,259],[2061,253],[2075,256],[2088,268],[2104,306],[2118,340],[2133,387],[2141,430],[2149,497],[2153,533],[2161,548],[2178,551],[2190,556],[2202,559],[2216,583],[2224,587],[2237,608],[2245,627],[2251,648],[2265,657],[2278,640],[2294,623],[2302,618],[2322,617],[2335,613],[2359,609],[2375,612],[2386,615],[2404,617],[2412,623],[2433,660],[2441,672],[2455,672],[2465,660],[2486,642],[2502,612],[2514,592],[2527,580],[2547,557],[2563,540],[2573,528],[2586,527],[2595,536],[2608,525]];

var LOWER = [[4,1271],[22,1270],[49,1255],[69,1240],[89,1200],[107,1152],[129,1103],[161,1103],[181,1127],[208,1127],[223,1101],[254,1121],[286,1164],[310,1182],[328,1172],[355,1133],[384,1173],[397,1165],[429,1085],[460,1026],[493,953],[509,965],[531,965],[545,981],[598,975],[620,959],[643,888],[665,852],[700,840],[710,837],[727,836],[740,839],[778,840],[809,840],[819,834],[844,826],[851,812],[859,809],[866,820],[873,823],[887,855],[899,864],[910,865],[922,851],[933,830],[953,803],[960,773],[968,742],[976,717],[985,677],[993,667],[998,662],[1010,673],[1023,677],[1037,677],[1047,669],[1060,675],[1077,676],[1090,682],[1111,687],[1123,673],[1136,645],[1148,620],[1159,603],[1167,583],[1176,565],[1186,551],[1201,550],[1215,544],[1238,546],[1241,567],[1251,598],[1259,608],[1269,612],[1286,607],[1303,593],[1320,573],[1338,547],[1358,517],[1366,500],[1375,488],[1384,491],[1392,486],[1421,486],[1441,495],[1453,507],[1473,522],[1499,527],[1513,537],[1533,560],[1556,568],[1579,583],[1590,610],[1599,617],[1625,618],[1651,606],[1682,608],[1699,615],[1717,605],[1737,577],[1774,572],[1786,567],[1808,560],[1826,547],[1840,546],[1857,520],[1866,493],[1892,463],[1918,460],[1938,461],[1966,452],[1986,446],[2014,447],[2022,490],[2035,563],[2053,640],[2063,683],[2076,700],[2084,720],[2102,744],[2110,748],[2124,758],[2133,758],[2147,740],[2153,713],[2161,717],[2180,742],[2206,756],[2216,755],[2224,757],[2239,748],[2251,728],[2265,726],[2273,728],[2284,739],[2300,736],[2318,737],[2335,752],[2355,765],[2386,774],[2412,774],[2441,747],[2465,748],[2486,743],[2518,746],[2549,732],[2569,723],[2582,703],[2593,677],[2600,683],[2608,697]];

var RED = [[4,1153],[27,1119],[45,1091],[56,1066],[76,1056],[112,1050],[134,1038],[156,1006],[179,963],[201,931],[221,921],[232,931],[246,983],[263,1038],[272,1066],[290,1083],[306,1084],[326,1058],[344,1038],[357,1026],[375,975],[388,943],[402,919],[420,900],[446,898],[467,907],[491,951],[507,943],[509,921],[531,902],[545,876],[567,844],[594,813],[616,785],[643,761],[670,745],[679,751],[700,765],[711,773],[729,797],[738,802],[750,790],[767,777],[775,772],[792,753],[809,734],[817,734],[830,742],[840,744],[859,730],[874,707],[887,663],[899,617],[910,583],[924,553],[939,540],[945,540],[964,552],[974,563],[991,588],[1010,610],[1029,625],[1041,629],[1048,623],[1062,597],[1077,577],[1098,543],[1111,527],[1129,524],[1146,519],[1159,522],[1178,527],[1236,523],[1257,463],[1286,420],[1306,402],[1315,405],[1338,423],[1361,445],[1384,455],[1395,448],[1430,430],[1447,432],[1464,448],[1481,477],[1504,487],[1521,490],[1544,510],[1567,537],[1585,563],[1602,568],[1636,567],[1653,555],[1671,537],[1688,527],[1711,511],[1728,516],[1751,502],[1768,495],[1786,470],[1797,453],[1817,438],[1840,436],[1860,425],[1883,417],[1912,417],[1940,410],[1964,408],[1978,395],[1998,390],[2012,383],[2022,403],[2041,467],[2051,497],[2065,540],[2078,573],[2094,612],[2110,606],[2139,623],[2153,642],[2180,687],[2200,702],[2216,703],[2241,690],[2265,688],[2286,670],[2300,655],[2322,667],[2339,682],[2363,713],[2384,725],[2404,717],[2424,702],[2445,693],[2465,687],[2486,675],[2510,650],[2527,620],[2549,600],[2573,583],[2588,585],[2608,608]];

var ORANGE = [[4,1178],[40,1145],[89,1097],[125,1058],[147,1048],[179,995],[214,963],[228,973],[246,977],[281,994],[312,1010],[344,1042],[362,1048],[380,1034],[424,967],[451,923],[482,907],[509,909],[531,907],[567,884],[603,848],[638,793],[665,779],[700,773],[750,771],[805,770],[815,763],[832,762],[847,758],[861,743],[876,720],[895,683],[914,657],[933,635],[955,607],[976,582],[997,572],[1014,575],[1029,587],[1044,596],[1077,591],[1098,585],[1111,578],[1132,560],[1152,543],[1175,528],[1194,526],[1240,522],[1269,490],[1298,467],[1332,443],[1372,427],[1389,433],[1421,433],[1441,439],[1476,453],[1504,457],[1521,463],[1539,480],[1556,500],[1579,520],[1602,540],[1625,547],[1648,554],[1676,552],[1699,540],[1722,537],[1745,520],[1768,503],[1797,480],[1820,468],[1846,462],[1866,440],[1889,427],[1929,419],[1958,412],[1978,405],[2014,397],[2024,407],[2045,437],[2061,463],[2076,480],[2088,500],[2102,517],[2110,533],[2131,577],[2153,620],[2163,633],[2192,653],[2220,670],[2245,685],[2273,691],[2302,677],[2327,677],[2351,685],[2380,693],[2408,695],[2437,708],[2461,710],[2486,693],[2518,660],[2551,637],[2576,617],[2592,607],[2608,610]];

// Momentum traces measured in three source grids: [x scale, x origin, y scale, y origin, points]
var MOM = [
 [1/1.12,0,1/3,1300,[[5,487],[12,520],[22,513],[30,572],[38,525],[45,552],[53,513],[61,555],[68,572],[78,648],[85,695],[92,703],[100,665],[108,635],[116,678],[124,607],[131,603],[147,668],[155,660],[165,600],[172,565],[186,545],[198,478],[203,467],[210,550],[225,513],[233,505],[245,595],[255,680],[265,820],[280,965],[288,920],[296,913],[310,927],[318,860],[330,760],[345,660],[358,560],[372,582],[380,560],[390,575],[398,540],[405,477],[422,450],[435,475],[445,520],[455,550],[462,585],[475,590],[485,675],[505,725],[515,743],[525,690],[538,655],[545,685],[555,700],[562,765],[572,660],[582,635],[590,630],[600,535],[608,522],[617,568],[625,512],[633,540],[640,495],[648,575],[657,600],[667,570],[680,635],[695,568],[705,595],[720,568],[730,578],[737,572],[745,590],[758,710],[775,750],[790,712],[798,785],[805,750],[812,780],[820,777],[828,730],[838,570],[847,605],[853,595],[867,632],[875,555],[885,593],[900,575],[907,575],[915,665],[930,725],[940,700],[948,665],[955,665],[965,580],[970,500],[978,533],[985,435],[993,410],[1008,338],[1015,350],[1023,440],[1032,475],[1040,560],[1048,612],[1056,607],[1065,715],[1072,715],[1080,745],[1088,760],[1095,830],[1104,790],[1120,745],[1128,795],[1145,750],[1152,755],[1160,703],[1166,700],[1182,520],[1190,522],[1198,548],[1205,548],[1213,530],[1228,567],[1243,557],[1260,680],[1275,650],[1283,643],[1292,700],[1307,660],[1322,717],[1337,667],[1345,688],[1355,670],[1368,675],[1380,650],[1386,648],[1395,515],[1402,457],[1410,465],[1417,517],[1425,510],[1433,550],[1440,550],[1448,512],[1457,560],[1464,578],[1472,715],[1482,767],[1487,767],[1495,723],[1510,718],[1518,738],[1527,735],[1535,752],[1550,705]]],
 [1/1.3067,1390,1/3,1385,[[0,415],[10,335],[20,367],[30,362],[38,365],[47,390],[55,393],[66,425],[73,433],[84,472],[92,487],[102,550],[110,550],[120,522],[130,488],[138,440],[147,497],[156,450],[166,478],[175,447],[185,485],[193,490],[202,478],[211,525],[220,503],[229,552],[238,482],[248,540],[256,523],[265,515],[275,440],[284,383],[293,432],[302,410],[311,432],[321,382],[330,418],[339,330],[348,304],[356,315],[365,355],[376,430],[385,370],[395,316],[403,316],[413,372],[422,405],[431,442],[440,465],[449,388],[458,383],[467,360],[485,382],[494,384],[503,290],[513,322],[522,290],[531,268],[540,342],[549,350],[558,375],[567,375],[576,412],[585,406],[595,453],[604,338],[614,368],[631,385],[640,398],[650,385],[668,410],[686,362],[696,418],[705,500],[714,418],[723,410],[732,387],[741,432],[760,335],[769,360],[778,405],[787,420],[797,307],[806,400],[814,373],[819,440],[824,587],[833,610],[842,692],[852,730],[860,720],[870,733],[888,690],[896,658],[906,778],[910,650],[916,510],[925,430],[934,376],[943,380],[952,485],[961,445],[970,465],[988,565],[997,495],[1007,563],[1030,565],[1044,455],[1053,453],[1062,472],[1071,465],[1080,425],[1090,395],[1100,380],[1108,373],[1117,356],[1126,408],[1135,412],[1144,403],[1154,345],[1163,319],[1171,325],[1180,345],[1190,360],[1199,470],[1208,476],[1217,447],[1226,487],[1235,490],[1244,520],[1254,567],[1263,545],[1272,517],[1281,525],[1290,408],[1299,432],[1309,388],[1318,365],[1336,368],[1345,345],[1355,395],[1367,373],[1373,373],[1384,412],[1392,412],[1408,360],[1418,397],[1428,362],[1437,348],[1446,300],[1455,328],[1464,315],[1473,271],[1481,272],[1491,330],[1500,358],[1510,325],[1519,358],[1528,350],[1546,343],[1555,395],[1564,400],[1568,432]]],
 [1/1.96,2400,1/3,1320,[[380,690],[395,743],[410,745]]]
];

function drawGrid(g) {
  var i, y;
  for (i = 0; i < 18; i++) {
    y = Math.round(155 + i * 68.4) + 0.5;
    el(g, "line", { "class": "grid-h", x1: 3, x2: 3046, y1: y, y2: y });
  }
  el(g, "line", { "class": "grid-top", x1: 3, x2: 3046, y1: 136.5, y2: 136.5 });
  [72,106,274,442,610,778,817,933,968,1136,1303,1471,1640,1678,1801,1843,2010,2178,2346,2515,2682,3008].forEach(function (x) {
    el(g, "line", { "class": "grid-v", x1: x + 0.5, x2: x + 0.5, y1: 132, y2: 1334 });
  });
}

function drawCandles(g, data, firstX, path) {
  data.forEach(function (b, i) {
    var x = Math.round(firstX + i * 7) + 0.5;
    path.d += "M" + x + " " + b[2] + "V" + b[3];
    if (b[0] === b[1]) {
      el(g, "line", { "class": "doji", x1: x - 3, x2: x + 3, y1: b[0], y2: b[0] });
    } else {
      el(g, "rect", { "class": b[4] ? "body-g" : "body-r", x: x - 2, y: b[0] + 0.5, width: 4, height: b[1] - b[0] });
    }
  });
}

function pts(a) { return a.map(function (p) { return p[0] + "," + p[1]; }).join(" "); }

var grid = document.getElementById("priceGrid");
drawGrid(grid);

var candleGroup = document.getElementById("candles");
var wickPath = { d: "" };
var wickEl = el(candleGroup, "path", { "class": "wicks" });
drawCandles(candleGroup, A, 501.6 - (A.length - 1) * 7, wickPath);
drawCandles(candleGroup, B, 508.6, wickPath);
drawCandles(candleGroup, C, 704.6, wickPath);
drawCandles(candleGroup, D, 2020.6 - (D.length - 1) * 7, wickPath);
drawCandles(candleGroup, E, 2608.6 - (E.length - 1) * 7, wickPath);
wickEl.setAttribute("d", wickPath.d);

var bands = document.getElementById("bands");
el(bands, "polyline", { "class": "band band-blue", points: pts(UPPER) });
el(bands, "polyline", { "class": "band band-blue", points: pts(LOWER) });
el(bands, "polyline", { "class": "band band-orange", points: pts(ORANGE) });
el(bands, "polyline", { "class": "band band-red", points: pts(RED) });

var mom = document.getElementById("momentumCanvas");
[[76, "grid-faint"], [817, "grid-faint"], [1342, "grid-faint"], [1677, "grid-faint"], [1880, "grid-faint"], [3008, "grid-v"]].forEach(function (l) {
  el(mom, "line", { "class": l[1], x1: l[0] + 0.5, x2: l[0] + 0.5, y1: 1385, y2: 1659 });
});
el(mom, "line", { "class": "zero", x1: 3, x2: 3046, y1: 1524.5, y2: 1524.5 });
var trace = [];
MOM.forEach(function (s) {
  s[4].forEach(function (p) { trace.push([(p[0] * s[0] + s[1]).toFixed(1), (p[1] * s[2] + s[3]).toFixed(1)]); });
});
el(mom, "polyline", { "class": "momentum", points: pts(trace) });
```
